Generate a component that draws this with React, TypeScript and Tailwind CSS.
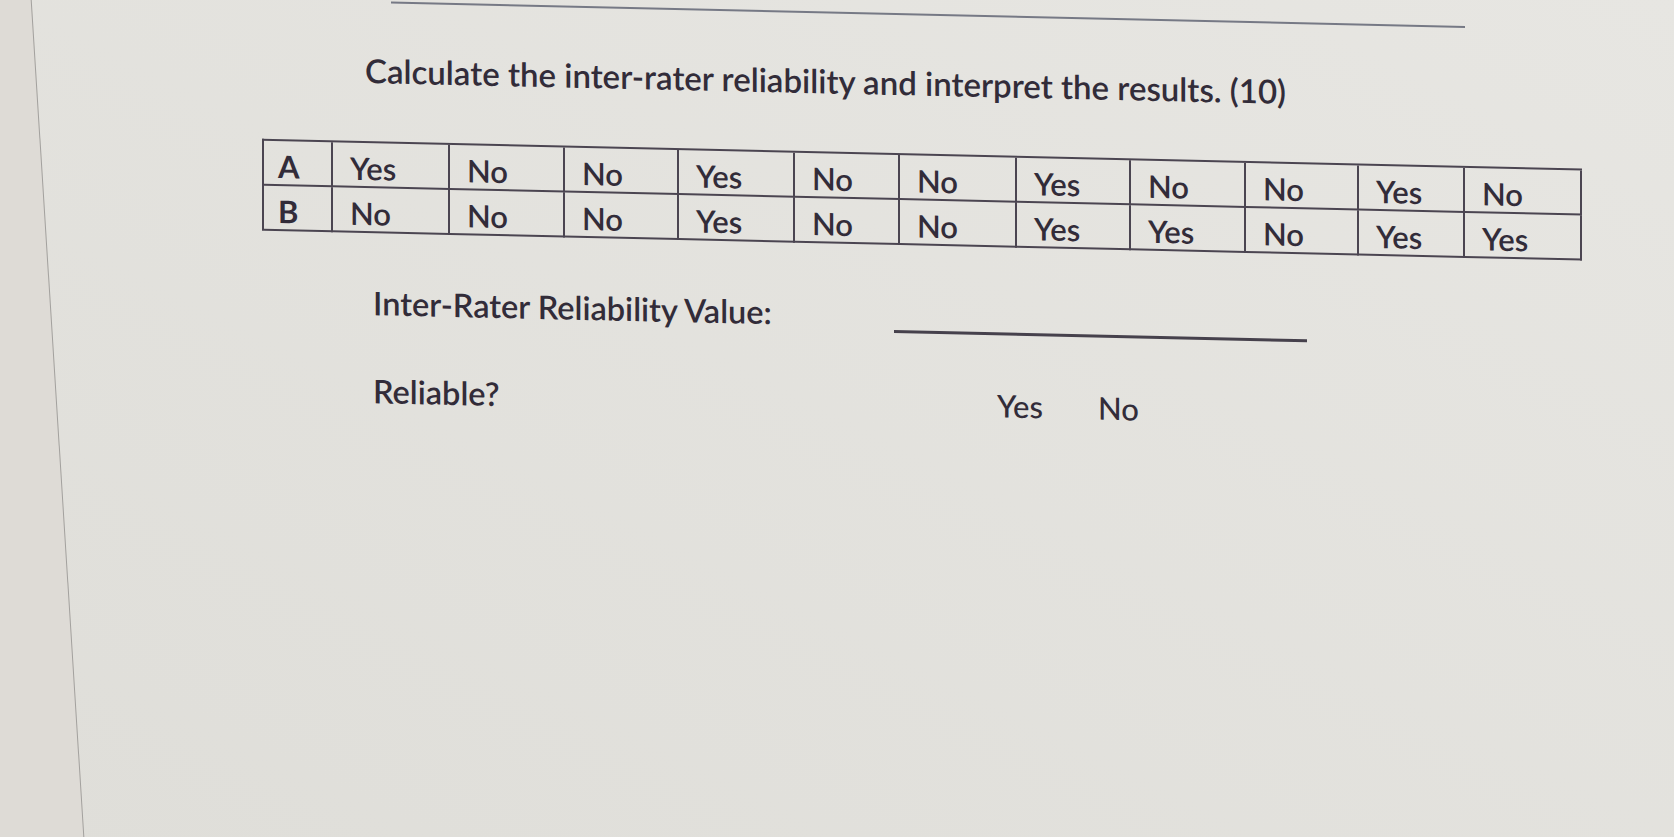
const ROW_A = ['Yes', 'No', 'No', 'Yes', 'No', 'No', 'Yes', 'No', 'No', 'Yes', 'No']
const ROW_B = ['No', 'No', 'No', 'Yes', 'No', 'No', 'Yes', 'Yes', 'No', 'Yes', 'Yes']

function RaterRow({ label, values }: { label: string; values: string[] }) {
  return (
    <>
      <div className="h-[45px] border-r-2 border-b-2 border-[#4b4551] pt-[10px] pl-[14px] text-[31px] font-bold leading-none">
        {label}
      </div>
      {values.map((v, i) => (
        <div
          key={i}
          className="h-[45px] border-r-2 border-b-2 border-[#4b4551] pt-[10px] pl-[17px] text-[31px] font-semibold leading-none"
        >
          {v}
        </div>
      ))}
    </>
  )
}

export default function App() {
  return (
    <div className="flex h-screen w-full overflow-hidden bg-linear-to-tr from-[#dfded9] to-[#e7e6e2] font-['Lato',sans-serif] text-[#322c39]">
      {/* page edge */}
      <div className="-ml-[50px] w-[108px] shrink-0 origin-center skew-x-[3.6deg] border-r border-[#a3a19e] bg-[#dedbd6]" />

      <div className="min-w-0 flex-1">
        <div className="flex origin-top-left skew-y-[1.3deg] flex-col items-start">
          <div className="-mt-[6px] ml-[333px] h-[2px] w-[1074px] bg-[#767985]" />

          <h1 className="mt-[51px] ml-[307px] text-[33px] font-semibold leading-none">
            Calculate the inter-rater reliability and interpret the results. (10)
          </h1>

          {/* ratings table */}
          <div className="mt-[54px] ml-[204px] grid grid-cols-[69px_117px_115px_114px_116px_105px_117px_114px_115px_113px_106px_117px] border-t-2 border-l-2 border-[#4b4551]">
            <RaterRow label="A" values={ROW_A} />
            <RaterRow label="B" values={ROW_B} />
          </div>

          <div className="mt-[54px] ml-[315px] flex items-start">
            <div className="w-[521px] text-[32.5px] font-semibold leading-none">Inter-Rater Reliability Value:</div>
            <div className="mt-[31px] h-[3px] w-[413px] bg-[#46414c]" />
          </div>

          <div className="mt-[54px] ml-[315px] flex items-baseline">
            <div className="w-[624px] text-[32.5px] font-semibold leading-none">Reliable?</div>
            <span className="w-[101px] text-[31px] font-medium leading-none">Yes</span>
            <span className="text-[31px] font-medium leading-none">No</span>
          </div>
        </div>
      </div>
    </div>
  )
}
